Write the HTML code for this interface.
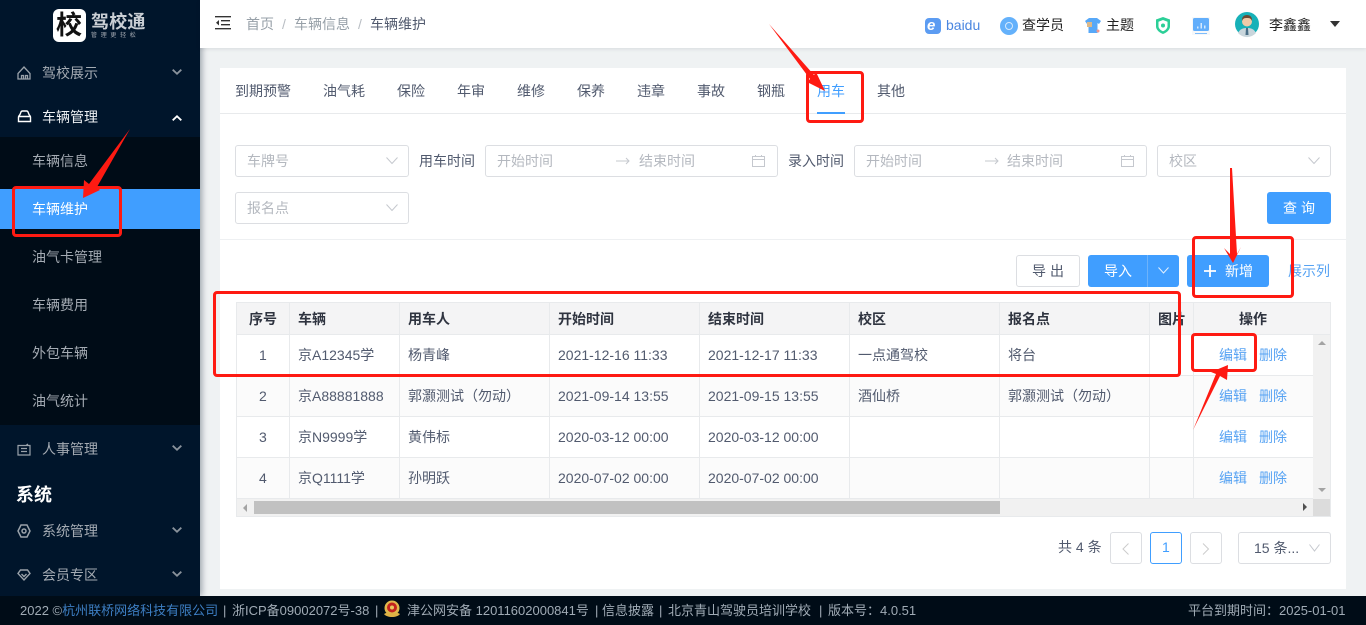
<!DOCTYPE html>
<html lang="zh"><head><meta charset="utf-8"><title>车辆维护</title>
<style>
*{box-sizing:border-box}
html,body{margin:0;padding:0}
body{width:1366px;height:625px;overflow:hidden;position:relative;background:#eff2f3;font:14px/20px "Liberation Sans","Noto Sans CJK SC",sans-serif;color:#515a6e}
.a{position:absolute;white-space:nowrap}
.b{position:absolute}
.m{color:#a4abb3}
.sub{color:#a4abb3}
.tab{position:absolute;top:81px;color:#515a6e}
.inp{position:absolute;height:32px;background:#fff;border:1px solid #dcdee2;border-radius:3px}
.ph{position:absolute;color:#b4b8bf;white-space:nowrap}
.lab{position:absolute;color:#515a6e;white-space:nowrap}
.th{position:absolute;top:309px;font-weight:700;color:#2f3440;white-space:nowrap}
.td{position:absolute;color:#515a6e;white-space:nowrap}
.lk{position:absolute;color:#57a3f3;white-space:nowrap}
.v{position:absolute;width:1px;top:303px;height:196px;background:#e8eaec}
.h{position:absolute;left:237px;height:1px;background:#e8eaec}
.rb{position:absolute;border:3px solid #fe1a12;border-radius:4px}
.f{position:absolute;top:601px;font-size:13px;color:#a0abb5;white-space:nowrap}
svg{position:absolute;overflow:visible}
</style></head><body>

<!-- sidebar -->
<div class="b" style="left:0;top:0;width:200px;height:596px;background:#00152b;box-shadow:2px 0 6px rgba(0,21,41,.35)"></div>
<div class="b" style="left:0;top:137px;width:200px;height:288px;background:#000c17"></div>
<div class="b" style="left:0;top:189px;width:200px;height:40px;background:#409eff"></div>

<div class="b" style="left:53px;top:9px;width:33px;height:33px;background:#fff;border-radius:6px"></div>
<div class="a" style="left:56px;top:10px;font-size:26px;line-height:31px;font-weight:700;color:#111">校</div>
<div class="a" style="left:91px;top:12px;font-size:18px;line-height:20px;font-weight:700;color:#c9ced4;letter-spacing:.2px">驾校通</div>
<div class="a" style="left:91px;top:32px;font-size:6px;line-height:8px;color:#a4abb3;letter-spacing:3.7px">管理更轻松</div>

<svg style="left:17px;top:66px" width="14" height="14" viewBox="0 0 14 14" fill="none" stroke="#9aa2aa" stroke-width="1.3"><path d="M1 13V7.500L7 1l6 6.500V13zM4.500 13V9.500h2V13M8.500 13V9.500h2V13"/></svg>
<div class="a m" style="left:42px;top:63px">驾校展示</div>
<svg style="left:172px;top:69px" width="10" height="6" fill="none" stroke="#8a939c" stroke-width="1.8"><path d="M.7.700 5 4.800 9.300.700"/></svg>

<svg style="left:17px;top:110px" width="15" height="13" viewBox="0 0 15 13" fill="none" stroke="#fff" stroke-width="1.400"><path d="M1.500 11.500V7C1.500 6 2.500 5.500 3 4.500L4 2C4.300 1.200 5 1 5.500 1h4c.5 0 1.200.2 1.500 1l1 2.500c.5 1 1.500 1.500 1.500 2.500v4.500zM2 6.500h11"/></svg>
<div class="a" style="left:42px;top:107px;color:#eef1f4">车辆管理</div>
<svg style="left:172px;top:115px" width="10" height="6" fill="none" stroke="#fff" stroke-width="1.8"><path d="M.7 5.300 5 1.200 9.300 5.300"/></svg>

<div class="a sub" style="left:32px;top:151px">车辆信息</div>
<div class="a" style="left:32px;top:199px;color:#fff">车辆维护</div>
<div class="a sub" style="left:32px;top:247px">油气卡管理</div>
<div class="a sub" style="left:32px;top:295px">车辆费用</div>
<div class="a sub" style="left:32px;top:343px">外包车辆</div>
<div class="a sub" style="left:32px;top:391px">油气统计</div>

<svg style="left:17px;top:443px" width="14" height="13" viewBox="0 0 14 13" fill="none" stroke="#9aa2aa" stroke-width="1.2"><path d="M1 2.500h12V12H1zM4 5.500h6M4 8.500h6M9 2.500 11 1"/></svg>
<div class="a m" style="left:42px;top:439px">人事管理</div>
<svg style="left:172px;top:445px" width="10" height="6" fill="none" stroke="#8a939c" stroke-width="1.8"><path d="M.7.700 5 4.800 9.300.700"/></svg>

<div class="a" style="left:16px;top:485px;font-size:18px;font-weight:700;color:#fff">系统</div>

<svg style="left:17px;top:524px" width="14" height="14" viewBox="0 0 14 14" fill="none" stroke="#9aa2aa" stroke-width="1.500"><path d="M4 1h6l3 6-3 6H4L1 7z"/><circle cx="7" cy="7" r="2"/></svg>
<div class="a m" style="left:42px;top:521px">系统管理</div>
<svg style="left:172px;top:527px" width="10" height="6" fill="none" stroke="#8a939c" stroke-width="1.8"><path d="M.7.700 5 4.800 9.300.700"/></svg>

<svg style="left:17px;top:569px" width="14" height="12" viewBox="0 0 14 12" fill="none" stroke="#9aa2aa" stroke-width="1.400"><path d="M3.500 1h7L13 4.500 7 11 1 4.500zM4.500 5 7 7.500 9.500 5"/></svg>
<div class="a m" style="left:42px;top:565px">会员专区</div>
<svg style="left:172px;top:571px" width="10" height="6" fill="none" stroke="#8a939c" stroke-width="1.8"><path d="M.7.700 5 4.800 9.300.700"/></svg>

<!-- header -->
<div class="b" style="left:200px;top:0;width:1166px;height:48px;background:#fff;box-shadow:0 1px 4px rgba(0,21,41,.1)"></div>
<svg style="left:215px;top:16px" width="16" height="14" fill="none" stroke="#333" stroke-width="1.300"><path d="M0 .7h16M6 4.700h9M6 8.700h9M0 12.700h16"/><path d="M4 4v5.500L1 6.700z" fill="#333" stroke="none"/></svg>
<div class="a" style="left:246px;top:14px;color:#97a0a8">首页</div>
<div class="a" style="left:282px;top:14px;color:#b8bdc3">/</div>
<div class="a" style="left:294px;top:14px;color:#97a0a8">车辆信息</div>
<div class="a" style="left:358px;top:14px;color:#b8bdc3">/</div>
<div class="a" style="left:370px;top:14px;color:#515a6e">车辆维护</div>

<div class="b" style="left:925px;top:18px;width:16px;height:16px;border-radius:4px;background:#5c9cf2"></div>
<div class="a" style="left:927px;top:16px;font-size:15px;font-weight:700;font-style:italic;color:#fff">e</div>
<div class="a" style="left:946px;top:15px;color:#4a86e0">baidu</div>
<div class="b" style="left:1000px;top:17px;width:18px;height:18px;border-radius:50%;background:#64b1fb"></div>
<div class="b" style="left:1005px;top:22px;width:8px;height:8px;border-radius:50%;border:1px solid #d5eafe"></div>
<div class="a" style="left:1022px;top:15px;color:#222">查学员</div>
<svg style="left:1085px;top:18px" width="16" height="15" viewBox="0 0 16 15"><path d="M4 0h8l4 3-2 3-1.500-1v10h-9V5L2 6 0 3z" fill="#57a8f8"/><rect x="2" y="4" width="5" height="5" fill="#dcb98a"/><circle cx="13" cy="13" r="1.500" fill="#f3968c"/></svg>
<div class="a" style="left:1106px;top:15px;color:#222">主题</div>
<svg style="left:1155px;top:17px" width="16" height="17" viewBox="0 0 16 17"><path d="M8 0l7 2.500v7C15 13 11 16 8 17 5 16 1 13 1 9.500v-7z" fill="#2bcf97"/><path d="M8 3l4.500 1.700v4.500C12.500 11.500 10 13.500 8 14.300 6 13.500 3.500 11.500 3.500 9.200V4.700z" fill="#fff"/><circle cx="8" cy="8.500" r="2" fill="#2bcf97"/></svg>
<svg style="left:1192px;top:17px" width="18" height="18" viewBox="0 0 18 18"><rect x="0" y="0" width="18" height="18" fill="#f6f8fa"/><rect x="1" y="1" width="16" height="13" rx="1.500" fill="#62aefb"/><path d="M5 9.500h1.500v2H5zM8.500 6h1.500v5.500H8.500zM12 8.500h1.500v3H12z" fill="#d5e9fd"/><rect x="3" y="16" width="12" height="1" fill="#7dbcfb"/></svg>
<svg style="left:1235px;top:12px" width="24" height="24" viewBox="0 0 24 24"><circle cx="12" cy="12" r="12" fill="#17b1b8"/><path d="M3 21c2-4 5-5 9-5s7 1 9 5a12 12 0 0 1-18 0z" fill="#c9d6dc"/><circle cx="12" cy="9.500" r="5" fill="#f0caa8"/><path d="M7 9c-.5-4 2-6 5-6s5.500 2 5 6c-1-2.500-2-3-5-3S8 6.500 7 9z" fill="#6d4a33"/><path d="M11 16h2l.5 7h-3z" fill="#4a6e86"/></svg>
<div class="a" style="left:1269px;top:15px;color:#222">李鑫鑫</div>
<div class="b" style="left:1330px;top:21px;width:0;height:0;border:5px solid transparent;border-top:6px solid #333;border-bottom:0"></div>

<!-- card -->
<div class="b" style="left:220px;top:68px;width:1126px;height:521px;background:#fff"></div>
<div class="b" style="left:220px;top:113px;width:1126px;height:1px;background:#e8eaec"></div>
<div class="b" style="left:220px;top:239px;width:1126px;height:1px;background:#eef0f2"></div>

<div class="tab" style="left:235px">到期预警</div>
<div class="tab" style="left:323px">油气耗</div>
<div class="tab" style="left:397px">保险</div>
<div class="tab" style="left:457px">年审</div>
<div class="tab" style="left:517px">维修</div>
<div class="tab" style="left:577px">保养</div>
<div class="tab" style="left:637px">违章</div>
<div class="tab" style="left:697px">事故</div>
<div class="tab" style="left:757px">钢瓶</div>
<div class="tab" style="left:817px;color:#409eff">用车</div>
<div class="tab" style="left:877px">其他</div>
<div class="b" style="left:817px;top:112px;width:28px;height:2px;background:#409eff"></div>

<!-- filters -->
<div class="inp" style="left:235px;top:145px;width:174px"></div>
<div class="ph" style="left:247px;top:151px">车牌号</div>
<svg style="left:386px;top:157px" width="12" height="8" fill="none" stroke="#c5c8ce" stroke-width="1"><path d="M.5.500 6 6.500 11.500.5"/></svg>
<div class="lab" style="left:419px;top:151px">用车时间</div>
<div class="inp" style="left:485px;top:145px;width:293px"></div>
<div class="ph" style="left:497px;top:151px">开始时间</div>
<svg style="left:616px;top:157px" width="14" height="8" fill="none" stroke="#c5c8ce" stroke-width="1"><path d="M0 4h13M10 1l3 3-3 3"/></svg>
<div class="ph" style="left:639px;top:151px">结束时间</div>
<svg style="left:752px;top:155px" width="13" height="12" fill="none" stroke="#c5c8ce" stroke-width="1"><path d="M.5 1.500h12v10H.5zM.5 4.500h12M3.500 0v2M9.500 0v2"/></svg>
<div class="lab" style="left:788px;top:151px">录入时间</div>
<div class="inp" style="left:854px;top:145px;width:293px"></div>
<div class="ph" style="left:866px;top:151px">开始时间</div>
<svg style="left:985px;top:157px" width="14" height="8" fill="none" stroke="#c5c8ce" stroke-width="1"><path d="M0 4h13M10 1l3 3-3 3"/></svg>
<div class="ph" style="left:1007px;top:151px">结束时间</div>
<svg style="left:1121px;top:155px" width="13" height="12" fill="none" stroke="#c5c8ce" stroke-width="1"><path d="M.5 1.500h12v10H.5zM.5 4.500h12M3.500 0v2M9.500 0v2"/></svg>
<div class="inp" style="left:1157px;top:145px;width:174px"></div>
<div class="ph" style="left:1169px;top:151px">校区</div>
<svg style="left:1308px;top:157px" width="12" height="8" fill="none" stroke="#c5c8ce" stroke-width="1"><path d="M.5.500 6 6.500 11.500.5"/></svg>
<div class="inp" style="left:235px;top:192px;width:174px"></div>
<div class="ph" style="left:247px;top:198px">报名点</div>
<svg style="left:386px;top:204px" width="12" height="8" fill="none" stroke="#c5c8ce" stroke-width="1"><path d="M.5.500 6 6.500 11.500.5"/></svg>
<div class="b" style="left:1267px;top:192px;width:64px;height:32px;background:#409eff;border-radius:3px"></div>
<div class="a" style="left:1283px;top:198px;color:#fff;letter-spacing:4px">查询</div>

<!-- actions -->
<div class="b" style="left:1016px;top:255px;width:64px;height:32px;background:#fff;border:1px solid #dcdee2;border-radius:3px"></div>
<div class="a" style="left:1032px;top:261px;letter-spacing:4px;color:#515a6e">导出</div>
<div class="b" style="left:1088px;top:255px;width:91px;height:32px;background:#409eff;border-radius:3px"></div>
<div class="b" style="left:1147px;top:255px;width:1px;height:32px;background:#6db3fb"></div>
<div class="a" style="left:1104px;top:261px;color:#fff">导入</div>
<svg style="left:1158px;top:267px" width="11" height="7" fill="none" stroke="#e3f0fe" stroke-width="1"><path d="M.5.500 5.500 6 10.500.5"/></svg>
<div class="b" style="left:1187px;top:255px;width:82px;height:32px;background:#409eff;border-radius:3px"></div>
<svg style="left:1204px;top:265px" width="12" height="12" fill="none" stroke="#fff" stroke-width="1.800"><path d="M6 0v12M0 6h12"/></svg>
<div class="a" style="left:1225px;top:261px;color:#fff">新增</div>
<div class="a" style="left:1288px;top:261px;color:#57a3f3">展示列</div>

<!-- table -->
<div class="b" style="left:236px;top:302px;width:1095px;height:215px;border:1px solid #e8eaec;background:#fff"></div>
<div class="b" style="left:237px;top:303px;width:1093px;height:32px;background:#f4f4f5"></div>
<div class="b" style="left:237px;top:376px;width:1076px;height:41px;background:#fbfbfb"></div>
<div class="b" style="left:237px;top:458px;width:1076px;height:41px;background:#fbfbfb"></div>
<div class="v" style="left:289px"></div><div class="v" style="left:399px"></div><div class="v" style="left:549px"></div><div class="v" style="left:699px"></div><div class="v" style="left:849px"></div><div class="v" style="left:999px"></div><div class="v" style="left:1149px"></div><div class="v" style="left:1193px"></div>
<div class="h" style="top:334px;width:1093px"></div>
<div class="h" style="top:375px;width:1076px"></div>
<div class="h" style="top:416px;width:1076px"></div>
<div class="h" style="top:457px;width:1076px"></div>
<div class="h" style="top:498px;width:1076px"></div>

<div class="th" style="left:249px">序号</div><div class="th" style="left:298px">车辆</div><div class="th" style="left:408px">用车人</div><div class="th" style="left:558px">开始时间</div><div class="th" style="left:708px">结束时间</div><div class="th" style="left:858px">校区</div><div class="th" style="left:1008px">报名点</div><div class="th" style="left:1158px">图片</div><div class="th" style="left:1239px">操作</div>

<div class="td" style="left:259px;top:345px">1</div><div class="td" style="left:298px;top:345px">京A12345学</div><div class="td" style="left:408px;top:345px">杨青峰</div><div class="td" style="left:558px;top:345px">2021-12-16 11:33</div><div class="td" style="left:708px;top:345px">2021-12-17 11:33</div><div class="td" style="left:858px;top:345px">一点通驾校</div><div class="td" style="left:1008px;top:345px">将台</div>
<div class="lk" style="left:1219px;top:345px">编辑</div><div class="lk" style="left:1259px;top:345px">删除</div>

<div class="td" style="left:259px;top:386px">2</div><div class="td" style="left:298px;top:386px">京A88881888</div><div class="td" style="left:408px;top:386px">郭灏测试（勿动）</div><div class="td" style="left:558px;top:386px">2021-09-14 13:55</div><div class="td" style="left:708px;top:386px">2021-09-15 13:55</div><div class="td" style="left:858px;top:386px">酒仙桥</div><div class="td" style="left:1008px;top:386px">郭灏测试（勿动）</div>
<div class="lk" style="left:1219px;top:386px">编辑</div><div class="lk" style="left:1259px;top:386px">删除</div>

<div class="td" style="left:259px;top:427px">3</div><div class="td" style="left:298px;top:427px">京N9999学</div><div class="td" style="left:408px;top:427px">黄伟标</div><div class="td" style="left:558px;top:427px">2020-03-12 00:00</div><div class="td" style="left:708px;top:427px">2020-03-12 00:00</div>
<div class="lk" style="left:1219px;top:427px">编辑</div><div class="lk" style="left:1259px;top:427px">删除</div>

<div class="td" style="left:259px;top:468px">4</div><div class="td" style="left:298px;top:468px">京Q1111学</div><div class="td" style="left:408px;top:468px">孙明跃</div><div class="td" style="left:558px;top:468px">2020-07-02 00:00</div><div class="td" style="left:708px;top:468px">2020-07-02 00:00</div>
<div class="lk" style="left:1219px;top:468px">编辑</div><div class="lk" style="left:1259px;top:468px">删除</div>

<!-- scrollbars -->
<div class="b" style="left:1313px;top:335px;width:17px;height:164px;background:#f1f1f1"></div>
<div class="b" style="left:237px;top:499px;width:1076px;height:17px;background:#f1f1f1"></div>
<div class="b" style="left:1313px;top:499px;width:17px;height:17px;background:#dcdcdc"></div>
<div class="b" style="left:254px;top:501px;width:746px;height:13px;background:#c1c1c1"></div>
<div class="b" style="left:243px;top:504px;width:0;height:0;border:4px solid transparent;border-right:4px solid #a3a3a3;border-left:0"></div>
<div class="b" style="left:1303px;top:503px;width:0;height:0;border:4px solid transparent;border-left:4px solid #505050;border-right:0"></div>
<div class="b" style="left:1318px;top:341px;width:0;height:0;border:4px solid transparent;border-bottom:4px solid #a3a3a3;border-top:0"></div>
<div class="b" style="left:1318px;top:488px;width:0;height:0;border:4px solid transparent;border-top:4px solid #a3a3a3;border-bottom:0"></div>

<!-- pagination -->
<div class="a" style="left:1058px;top:537px;color:#515a6e">共 4 条</div>
<div class="b" style="left:1110px;top:532px;width:32px;height:32px;border:1px solid #dcdee2;border-radius:3px"></div>
<svg style="left:1122px;top:543px" width="8" height="12" fill="none" stroke="#ccc" stroke-width="1"><path d="M6.500.5 1 6l5.500 5.500"/></svg>
<div class="b" style="left:1150px;top:532px;width:32px;height:32px;border:1px solid #409eff;border-radius:3px"></div>
<div class="a" style="left:1162px;top:537px;color:#409eff">1</div>
<div class="b" style="left:1190px;top:532px;width:32px;height:32px;border:1px solid #dcdee2;border-radius:3px"></div>
<svg style="left:1202px;top:543px" width="8" height="12" fill="none" stroke="#ccc" stroke-width="1"><path d="M1 .5 6.500 6 1 11.500"/></svg>
<div class="b" style="left:1238px;top:532px;width:93px;height:32px;border:1px solid #dcdee2;border-radius:3px"></div>
<div class="a" style="left:1254px;top:538px;color:#515a6e">15 条...</div>
<svg style="left:1309px;top:544px" width="11" height="8" fill="none" stroke="#c5c8ce" stroke-width="1"><path d="M.5.500 5.500 7 10.500.5"/></svg>

<!-- footer -->
<div class="b" style="left:0;top:596px;width:1366px;height:29px;background:#000c17"></div>
<div class="f" style="left:20px">2022 ©<span style="color:#3d7fc4">杭州联桥网络科技有限公司</span></div>
<div class="f" style="left:223px">|</div>
<div class="f" style="left:232px">浙ICP备09002072号-38</div>
<div class="f" style="left:375px">|</div>
<svg style="left:383px;top:600px" width="18" height="19" viewBox="0 0 18 19"><circle cx="9" cy="8" r="7.500" fill="#e0b84c"/><circle cx="9" cy="7.500" r="5" fill="#c3231e"/><circle cx="9" cy="7.500" r="2" fill="#e9c95f"/><path d="M1 14c3 4 13 4 16 0l-2-1H3z" fill="#dfb245"/></svg>
<div class="f" style="left:407px">津公网安备 12011602000841号</div>
<div class="f" style="left:595px">|</div>
<div class="f" style="left:602px">信息披露</div>
<div class="f" style="left:659px">|</div>
<div class="f" style="left:668px">北京青山驾驶员培训学校</div>
<div class="f" style="left:819px">|</div>
<div class="f" style="left:828px">版本号：4.0.51</div>
<div class="f" style="left:1188px">平台到期时间：2025-01-01</div>

<!-- red annotations -->
<div class="rb" style="left:12px;top:186px;width:110px;height:51px"></div>
<div class="rb" style="left:806px;top:71px;width:58px;height:52px"></div>
<div class="rb" style="left:213px;top:291px;width:968px;height:86px"></div>
<div class="rb" style="left:1192px;top:236px;width:102px;height:62px"></div>
<div class="rb" style="left:1191px;top:333px;width:66px;height:39px"></div>
<svg style="left:0;top:0" width="1366" height="625" viewBox="0 0 1366 625" fill="#fe1a12">
<path d="M130 129 97 187 100 190 83 198 84 180 89 184Z"/>
<path d="M769 24 814 75 816 72 825 91 807 82 810 79Z"/>
<path d="M1230 168 1232 168 1237 254 1241 247 1233 263 1224 248 1230 254Z"/>
<path d="M1193 430 1220 376 1227 380 1228 365 1211 372 1216 374Z"/>
</svg>
</body></html>
